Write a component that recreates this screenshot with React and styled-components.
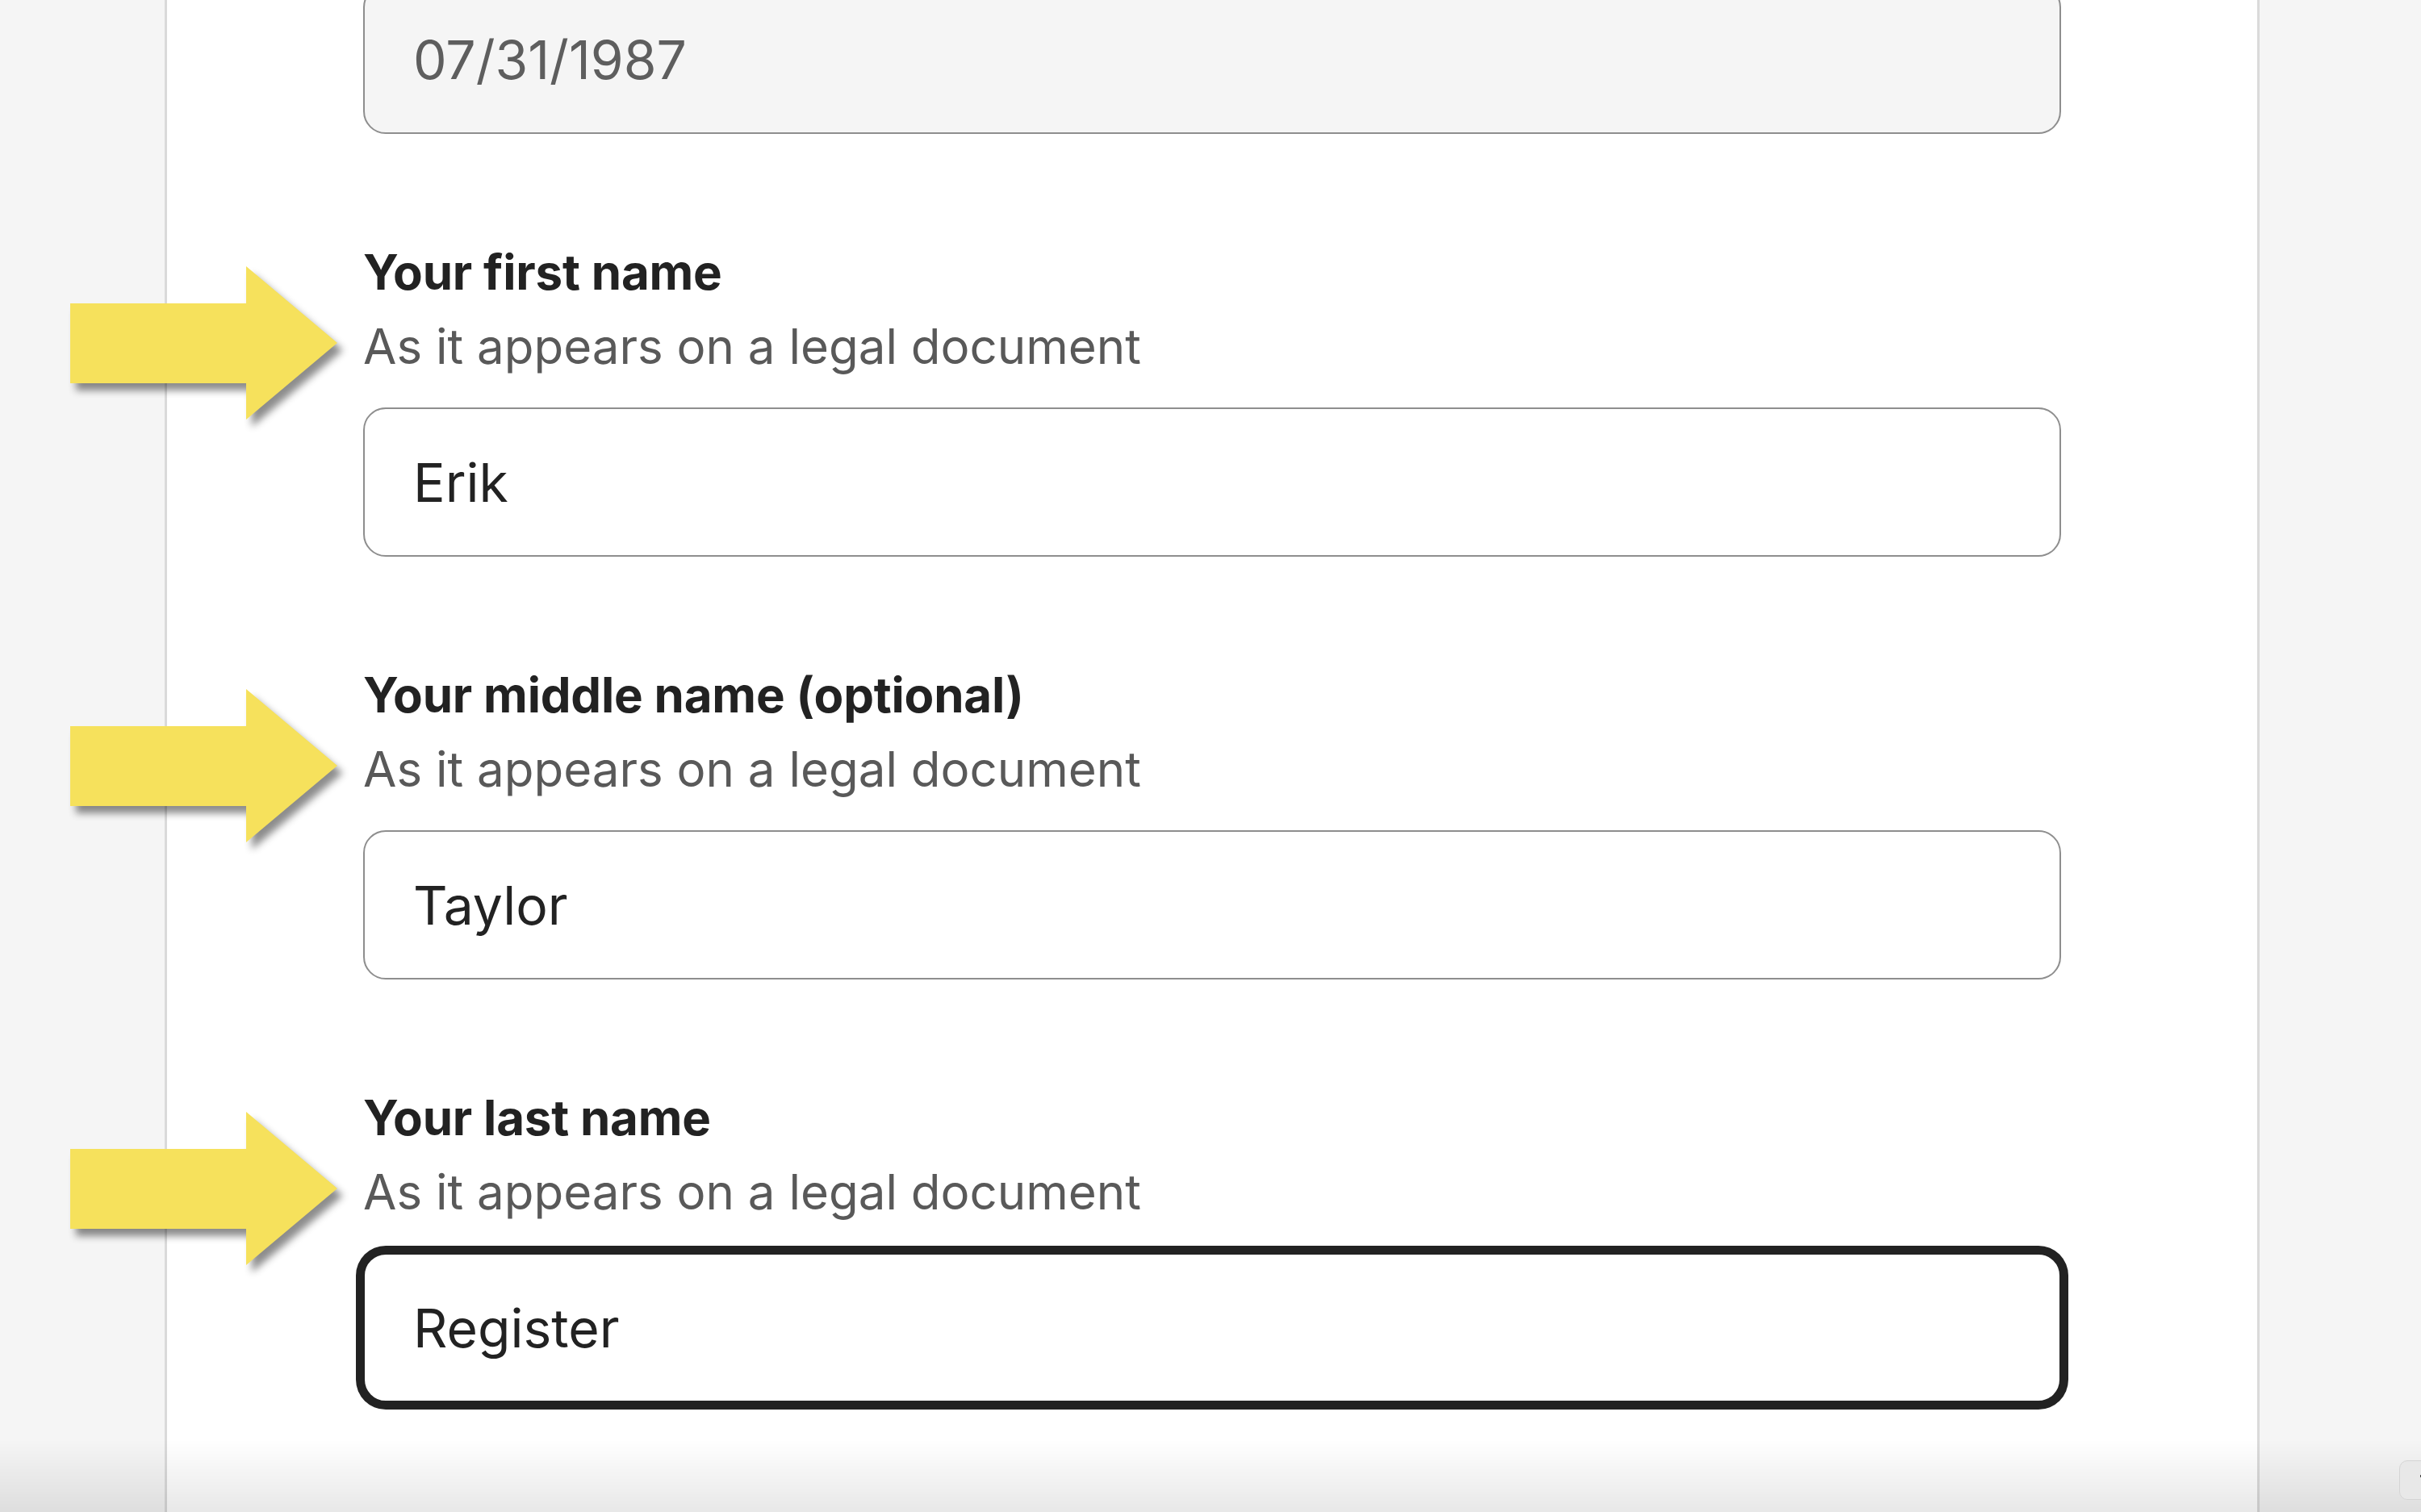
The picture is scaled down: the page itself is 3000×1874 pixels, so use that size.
import React from "react";
import styled, { createGlobalStyle } from "styled-components";

const Global = createGlobalStyle`
  html, body { margin: 0; padding: 0; }
  body {
    background: #f5f5f5;
    font-family: Inter, "Noto Sans", Arial, sans-serif;
    overflow: hidden;
  }
`;

const Page = styled.div`
  display: flex;
  justify-content: flex-start;
  padding-left: 204px;
  height: 1874px;
  overflow: hidden;
`;

const Panel = styled.main`
  width: 2596px;
  background: #ffffff;
  border-left: 3px solid #dadada;
  border-right: 3px solid #dadada;
  padding: 0 243px;
  box-sizing: border-box;
  flex-shrink: 0;
`;

const Form = styled.div`
  display: flex;
  flex-direction: column;
  gap: 125px;
  margin-top: -19px;
`;

const Field = styled.div`
  position: relative;
  display: flex;
  flex-direction: column;
`;

const Label = styled.label`
  font-size: 60px;
  line-height: 92px;
  font-weight: 700;
  color: #222222;
  letter-spacing: -0.2px;
`;

const Hint = styled.div`
  font-size: 60px;
  line-height: 92px;
  font-weight: 400;
  color: #595959;
  margin-bottom: 30px;
`;

const Input = styled.div`
  height: 185px;
  box-sizing: border-box;
  border: 2px solid ${(p) => (p.$focused ? "#222222" : "#8e8e8e")};
  border-radius: 28px;
  background: ${(p) => (p.$disabled ? "#f5f5f5" : "#ffffff")};
  box-shadow: ${(p) => (p.$focused ? "0 0 0 9px #222222" : "none")};
  display: flex;
  align-items: center;
  padding-left: 60px;
  font-size: 66px;
  color: ${(p) => (p.$disabled ? "#5e5e5e" : "#222222")};
`;

const Arrow = styled.svg`
  position: absolute;
  left: -363px;
  top: 39px;
  width: 331px;
  height: 190px;
  overflow: visible;
  filter: drop-shadow(7px 9px 5px rgba(0, 0, 0, 0.45));
`;

const BottomShade = styled.div`
  position: fixed;
  left: 0;
  right: 0;
  bottom: 0;
  height: 90px;
  background: linear-gradient(to bottom, rgba(0, 0, 0, 0), rgba(0, 0, 0, 0.09));
  pointer-events: none;
`;

const CornerWidget = styled.div`
  position: fixed;
  left: 2973px;
  top: 1810px;
  width: 80px;
  height: 49px;
  border-radius: 10px;
  background: #e8e8e8;
  border: 1px solid #d4d4d4;
  box-sizing: border-box;
  &::after {
    content: "";
    position: absolute;
    left: 25px;
    top: 17px;
    width: 3px;
    height: 3px;
    background: #444;
  }
`;

const PointerArrow = () => (
  <Arrow viewBox="0 0 331 190" aria-hidden="true">
    <path d="M0 46 L218 46 L218 0 L331 95 L218 190 L218 145 L0 145 Z" fill="#F6E15C" />
  </Arrow>
);

const fields = [
  { label: "Your first name", value: "Erik" },
  { label: "Your middle name (optional)", value: "Taylor" },
  { label: "Your last name", value: "Register", focused: true },
];

export default function App() {
  return (
    <>
      <Global />
      <Page>
        <Panel>
          <Form>
            <Input $disabled>07/31/1987</Input>
            {fields.map((f) => (
              <Field key={f.label}>
                <PointerArrow />
                <Label>{f.label}</Label>
                <Hint>As it appears on a legal document</Hint>
                <Input $focused={f.focused}>{f.value}</Input>
              </Field>
            ))}
          </Form>
        </Panel>
      </Page>
      <BottomShade />
      <CornerWidget />
    </>
  );
}
